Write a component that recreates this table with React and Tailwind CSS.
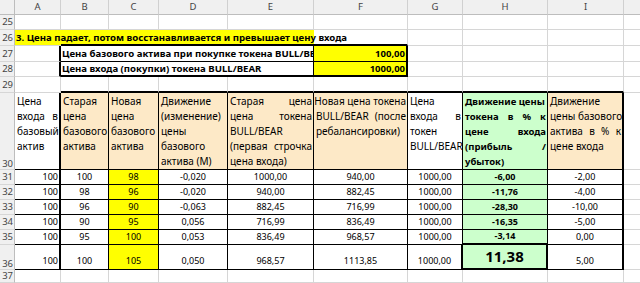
import React from "react";

const R = {
  g: "border-r border-r-[#d6d6d6]",
  k: "border-r border-r-black",
  k2: "border-r-2 border-r-black",
  n: "",
};
const B = {
  g: "border-b border-b-[#d6d6d6]",
  k: "border-b border-b-black",
  k2: "border-b-2 border-b-black",
  n: "",
};

function Cell({ r = "g", b = "g", className = "", children }) {
  return (
    <div className={`flex min-w-0 overflow-hidden ${R[r]} ${B[b]} ${className}`}>
      {children}
    </div>
  );
}

function RowHead({ n, end }) {
  return (
    <div
      className={`flex justify-end ${end ? "items-end pb-[1px]" : "items-center"} overflow-hidden bg-[#f0f0f0] border-r border-r-[#bdbdbd] border-b border-b-[#d6d6d6] pr-[1px] text-[#444] text-[9.5px] leading-none`}
    >
      {n}
    </div>
  );
}

function ColHead({ c, last }) {
  return (
    <div
      className={`flex items-center justify-center bg-[#f0f0f0] ${last ? "" : "border-r border-r-[#d0d0d0]"} border-b border-b-[#bdbdbd] text-[#444] text-[9.5px] leading-none`}
    >
      {c}
    </div>
  );
}

function JL({ w }) {
  return (
    <div className="flex justify-between whitespace-nowrap">
      {w.map((x, i) => (
        <span key={i}>{x}</span>
      ))}
    </div>
  );
}

function Head({ lines, className = "", r = "k", b = "k" }) {
  return (
    <Cell r={r} b={b} className={`flex-col pl-[2px] pr-[1px] pt-[1px] leading-[15px] ${className}`}>
      {lines.map((l, i) =>
        Array.isArray(l) ? (
          <JL key={i} w={l} />
        ) : typeof l === "object" ? (
          <div key={i} className="flex justify-end whitespace-nowrap">{l.t}</div>
        ) : (
          <div key={i} className="whitespace-nowrap">{l}</div>
        )
      )}
    </Cell>
  );
}

const data = [
  ["100", "100", "98", "-0,020", "1000,00", "940,00", "1000,00", "-6,00", "-2,00"],
  ["100", "98", "96", "-0,020", "940,00", "882,45", "1000,00", "-11,76", "-4,00"],
  ["100", "96", "90", "-0,063", "882,45", "716,99", "1000,00", "-28,30", "-10,00"],
  ["100", "90", "95", "0,056", "716,99", "836,49", "1000,00", "-16,35", "-5,00"],
  ["100", "95", "100", "0,053", "836,49", "968,57", "1000,00", "-3,14", "0,00"],
];

function GrayRow({ n }) {
  return (
    <>
      <RowHead n={n} />
      {Array.from({ length: 9 }).map((_, i) => (
        <Cell key={i} />
      ))}
      <Cell r="n" />
    </>
  );
}

export default function App() {
  const num = "justify-center items-end pb-[1px] leading-[12px]";
  const n36 = "justify-center items-end pb-[2px] leading-[12px]";
  return (
    <div
      className="w-[640px] h-[283px] overflow-hidden bg-white text-black text-[9px]"
      style={{ fontFamily: '"Noto Sans", "Open Sans", sans-serif' }}
    >
      <div className="grid grid-cols-[15px_46px_48px_50px_69px_86px_94px_55px_85px_76px_1fr] grid-rows-[15px_15px_16px_16px_15px_16px_77px_15px_15px_15px_15px_15px_25px_13px] h-[283px]">
        {/* header */}
        <div className="bg-[#f0f0f0] border-r border-r-[#bdbdbd] border-b border-b-[#bdbdbd]" />
        {["A", "B", "C", "D", "E", "F", "G", "H", "I", ""].map((c, i) => (
          <ColHead key={i} c={c} last={i === 9} />
        ))}

        {/* 25 */}
        <GrayRow n="25" />

        {/* 26 */}
        <RowHead n="26" />
        <Cell r="n" className="relative z-10 overflow-visible bg-[#ffff00] items-center pl-[1px]">
          <span className="whitespace-nowrap font-bold leading-none text-[9.6px]">
            3. Цена падает, потом восстанавливается и превышает цену входа
          </span>
        </Cell>
        <Cell r="n" b="k2" className="bg-[#ffff00]" />
        <Cell r="n" b="k2" className="bg-[#ffff00]" />
        <Cell r="n" b="k2" className="bg-[#ffff00]" />
        <Cell r="n" b="k2" className="bg-[#ffff00]" />
        <Cell r="g" b="k2" />
        <Cell />
        <Cell />
        <Cell />
        <Cell r="n" />

        {/* 27 */}
        <RowHead n="27" />
        <Cell r="k2" />
        <Cell r="k" b="k" className="col-span-4 items-center pl-[1px] font-bold whitespace-nowrap leading-none text-[9.6px]">
          Цена базового актива при покупке токена BULL/BEAR
        </Cell>
        <Cell r="k2" b="k" className="bg-[#ffff00] items-center justify-end pr-[1px] font-bold leading-none text-[9.5px]">
          100,00
        </Cell>
        <Cell />
        <Cell />
        <Cell />
        <Cell r="n" />

        {/* 28 */}
        <RowHead n="28" />
        <Cell r="k2" />
        <Cell r="k" b="k2" className="col-span-4 items-center pl-[1px] font-bold whitespace-nowrap leading-none text-[9.6px]">
          Цена входа (покупки) токена BULL/BEAR
        </Cell>
        <Cell r="k2" b="k2" className="bg-[#ffff00] items-center justify-end pr-[1px] font-bold leading-none text-[9.5px]">
          1000,00
        </Cell>
        <Cell />
        <Cell />
        <Cell />
        <Cell r="n" />

        {/* 29 */}
        <RowHead n="29" />
        <Cell />
        {Array.from({ length: 8 }).map((_, i) => (
          <Cell key={i} b="k2" />
        ))}
        <Cell r="n" />

        {/* 30 */}
        <RowHead n="30" end />
        <Head r="k2" className="text-[10px]" lines={["Цена", ["входа", "в"], "базовый", "актив"]} />
        <Head className="bg-[#fde9c7] text-[10px]" lines={["Старая", "цена", "базового", "актива"]} />
        <Head className="bg-[#fde9c7] text-[10px]" lines={["Новая", "цена", "базового", "актива"]} />
        <Head className="bg-[#fde9c7] text-[10px]" lines={["Движение", "(изменение)", "цены", "базового", "актива (М)"]} />
        <Head
          className="bg-[#fde9c7] text-[10px]"
          lines={[["Старая", "цена"], ["цена", "токена"], "BULL/BEAR", ["(первая", "строчка"], "цена входа)"]}
        />
        <Head
          className="bg-[#fde9c7] text-[10px]"
          lines={[{ t: "Новая цена токена" }, ["BULL/BEAR", "(после"], "ребалансировки)"]}
        />
        <Head className="text-[10px]" lines={["Цена", ["входа", "в"], "токен", "BULL/BEAR"]} />
        <Head
          className="bg-[#ccffcc] font-bold text-[9.5px]"
          lines={["Движение цены", ["токена", "в", "%", "к"], ["цене", "входа"], ["(прибыль", "/"], "убыток)"]}
        />
        <Head
          r="k2"
          className="bg-[#fde9c7] text-[10px]"
          lines={["Движение", "цены базового", ["актива", "в", "%", "к"], "цене входа"]}
        />
        <Cell r="n" />

        {/* 31-35 */}
        {data.map((row, ri) => (
          <React.Fragment key={ri}>
            <RowHead n={String(31 + ri)} />
            <Cell r="k2" b="k" className="justify-end items-end pb-[1px] pr-[1px] leading-[12px]">
              {row[0]}
            </Cell>
            <Cell r="k" b="k" className={num}>{row[1]}</Cell>
            <Cell r="k" b="k" className={`${num} bg-[#ffff00]`}>{row[2]}</Cell>
            <Cell r="k" b="k" className={num}>{row[3]}</Cell>
            <Cell r="k" b="k" className={num}>{row[4]}</Cell>
            <Cell r="k" b="k" className={num}>{row[5]}</Cell>
            <Cell r="k" b="k" className={num}>{row[6]}</Cell>
            <Cell r="k" b={ri === 4 ? "k2" : "k"} className={`${num} bg-[#ccffcc] font-bold`}>
              {row[7]}
            </Cell>
            <Cell r="k2" b="k" className={num}>{row[8]}</Cell>
            <Cell r="n" />
          </React.Fragment>
        ))}

        {/* 36 */}
        <RowHead n="36" end />
        <Cell r="k2" b="k" className="justify-end items-end pb-[2px] pr-[1px] leading-[12px]">100</Cell>
        <Cell r="k" b="k" className={n36}>100</Cell>
        <Cell r="k" b="k" className={`${n36} bg-[#ffff00]`}>105</Cell>
        <Cell r="k" b="k" className={n36}>0,050</Cell>
        <Cell r="k" b="k" className={n36}>968,57</Cell>
        <Cell r="k" b="k" className={n36}>1113,85</Cell>
        <Cell r="k2" b="k" className={n36}>1000,00</Cell>
        <Cell r="k2" b="k2" className="justify-center items-center bg-[#ccffcc] font-bold text-[15px] leading-none">
          11,38
        </Cell>
        <Cell r="k2" b="k" className={n36}>5,00</Cell>
        <Cell r="n" />

        {/* 37 */}
        <GrayRow n="37" />
      </div>
    </div>
  );
}
